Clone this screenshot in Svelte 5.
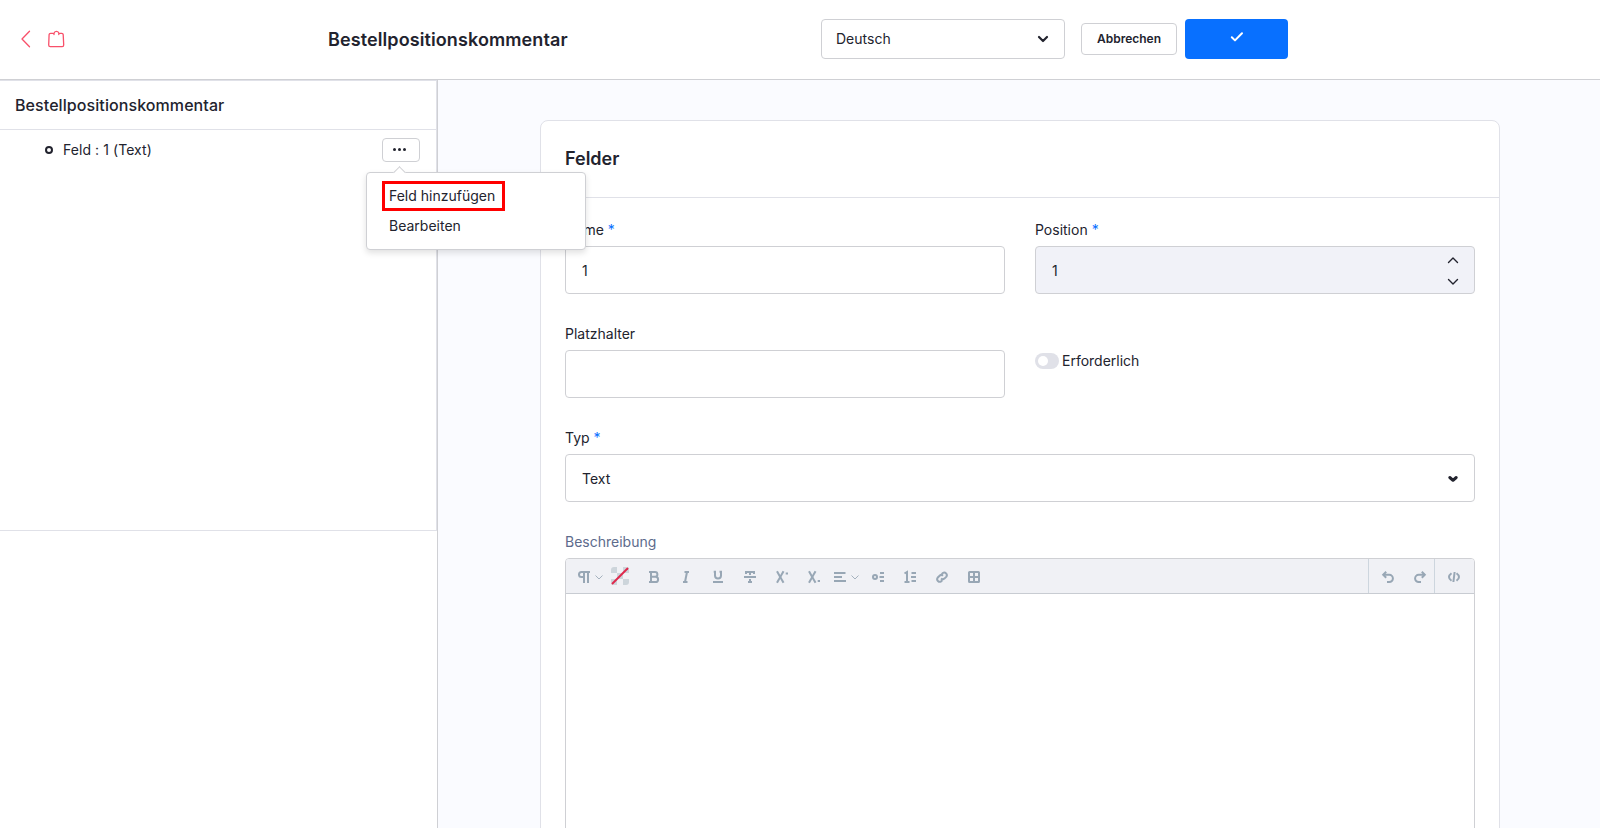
<script lang="ts">
	interface Tool {
		name: string;
		paths: string[];
		width?: number;
		chevron?: boolean;
		color?: boolean;
	}

	let language = $state('Deutsch');
	let name = $state('1');
	let position = $state('1');
	let placeholder = $state('');
	let required = $state(false);
	let menuOpen = $state(true);

	// toolbar icons are drawn on a 12x12 grid
	const tools: Tool[] = [
		{
			name: 'Absatz',
			paths: ['M12 1H3.5a2.5 2.5 0 0 0 0 5H6', 'M6 1v11', 'M10 1v11'],
			width: 38,
			chevron: true
		},
		{ name: 'Textfarbe', paths: [], width: 34, color: true },
		{
			name: 'Fett',
			paths: ['M1 1h6a2.4 2.4 0 0 1 0 4.8H3M7 5.8h.5a2.6 2.6 0 0 1 0 5.2H1', 'M3 1v10']
		},
		{ name: 'Kursiv', paths: ['M4.5 1H9', 'M3 11h4.5', 'M7 1 5 11'] },
		{ name: 'Unterstrichen', paths: ['M1 11h10', 'M3 0v4.5a3 3 0 0 0 6 0V0', 'M1.7.8H4M7.500.8h2.500'] },
		{ name: 'Durchgestrichen', paths: ['M2 3V1h8v2', 'M6 1v3', 'M0 6h12', 'M6 8v3', 'M4 11h4'] },
		{ name: 'Hochgestellt', paths: ['M1 .3 7.5 11.700', 'M7.5.3 1 11.700', 'M9.700 2.500h2.300'] },
		{ name: 'Tiefgestellt', paths: ['M1 .3 7.5 11.700', 'M7.5.3 1 11.700', 'M9.700 10h2.300'] },
		{ name: 'Ausrichtung', paths: ['M0 2h11.5', 'M0 6h8', 'M0 10h12'], chevron: true },
		{
			name: 'Liste',
			paths: ['M3 4a2 2 0 1 1 0 4a2 2 0 1 1 0-4', 'M8 2h4', 'M7.5 6H12', 'M8 10h4']
		},
		{
			name: 'Nummerierte Liste',
			paths: ['M.5 2.5 3 1v10', 'M.5 11h5', 'M7.5 2H12', 'M7 6h5', 'M7.5 10H12']
		},
		{
			name: 'Link',
			paths: [
				'M5 7.6a2.5 2.5 0 0 0 3.4 0l2-2A2.6 2.6 0 0 0 6.8 2L5.7 3.1',
				'M7 4.7a2.5 2.5 0 0 0-3.4 0l-2 2A2.6 2.6 0 0 0 5.2 10.3L6.3 9.2'
			]
		},
		{
			name: 'Tabelle',
			paths: ['M1.600 1h8.800q.6 0 .6.6v8.800q0 .6-.6.6H1.600q-.6 0-.6-.6V1.600q0-.6.6-.6z', 'M6 1v10', 'M1 6h10']
		}
	];

	const history: Tool[] = [
		{ name: 'Rückgängig', paths: ['M4.2.8 1.2 3.8l3 3', 'M1.5 3.8h5.8a3.6 3.6 0 0 1 0 7.2H5'] },
		{ name: 'Wiederholen', paths: ['M7.8.8l3 3-3 3', 'M10.5 3.8H4.7a3.6 3.6 0 0 0 0 7.2H7'] }
	];

	const code: Tool = {
		name: 'Quelltext',
		paths: ['M3.5 2.2Q1 4 1 6t2.5 3.8', 'M8.5 2.2Q11 4 11 6T8.5 9.8', 'M6.6 1 5.4 11']
	};
</script>

{#snippet tool(item: Tool)}
	<button class="tool" style:width="{item.width ?? 32}px" aria-label={item.name}>
		{#if item.color}
			<svg class="swatch" width="18" height="18" viewBox="0 0 18 18">
				<path
					d="M3 0h3v6H0V3a3 3 0 0 1 3-3zM12 0h3a3 3 0 0 1 3 3v3h-6zM6 6h6v6H6zM0 12h6v6H3a3 3 0 0 1-3-3zM12 12h6v3a3 3 0 0 1-3 3h-3z"
					fill="#cdd5db"
				/>
				<path d="M1.5 16.5 16.5 1.5" stroke="#de294c" stroke-width="2" stroke-linecap="round" />
			</svg>
		{:else}
			<svg class="glyph" width="12" height="12" viewBox="0 0 12 12">
				{#each item.paths as d}
					<path {d} />
				{/each}
			</svg>
		{/if}
		{#if item.chevron}
			<svg class="caret" width="8" height="5" viewBox="0 0 8 5"><path d="M.5.5 4 4 7.5.5" /></svg>
		{/if}
	</button>
{/snippet}

<div class="page">
	<header class="header">
		<div class="nav">
			<svg width="10" height="18" viewBox="0 0 10 18"><path d="M8.5 1.3 1 9l7.5 7.7" /></svg>
			<svg class="bag" width="17" height="18" viewBox="0 0 17 18">
				<path
					d="M6 4.500V3.400H2.500Q1.200 3.400 1.100 4.600L.7 15q0 1.600 1.500 1.600h12q1.500 0 1.500-1.600l-.5-10.400q-.1-1.200-1.400-1.200h-3v1.100M6 3.400a2.500 2.500 0 0 1 4.900 0"
				/>
			</svg>
		</div>
		<h1>Bestellpositionskommentar</h1>
		<div class="actions">
			<button class="language">
				{language}
				<svg width="12" height="8" viewBox="0 0 12 8"><path d="M2 2l4 4 4-4" /></svg>
			</button>
			<button class="cancel">Abbrechen</button>
			<button class="save" aria-label="Speichern">
				<svg width="14" height="12" viewBox="0 0 14 12"><path d="M1.8 6.3 5 9.4l7-7.1" /></svg>
			</button>
		</div>
	</header>

	<div class="content">
		<aside class="sidebar">
			<section class="tree">
				<h2>Bestellpositionskommentar</h2>
				<div class="node">
					<span class="dot"></span>
					<span class="node-label">Feld : 1 (Text)</span>
					<div class="context">
						<button class="more" aria-label="Mehr" onclick={() => (menuOpen = !menuOpen)}>
							<i></i><i></i><i></i>
						</button>
						{#if menuOpen}
							<ul class="menu">
								<li class="marked">Feld hinzufügen</li>
								<li>Bearbeiten</li>
							</ul>
						{/if}
					</div>
				</div>
			</section>
		</aside>

		<main>
			<section class="card">
				<h3>Felder</h3>
				<div class="form">
					<div class="field">
						<label for="name">Name <b>*</b></label>
						<input id="name" bind:value={name} />
					</div>
					<div class="field">
						<label for="position">Position <b>*</b></label>
						<div class="number">
							<input id="position" bind:value={position} />
							<div class="steps">
								<svg width="12" height="8" viewBox="0 0 12 8"><path d="M1.5 6.5 6 2l4.5 4.5" /></svg>
								<svg width="12" height="8" viewBox="0 0 12 8"><path d="M1.5 1.5 6 6l4.5-4.5" /></svg>
							</div>
						</div>
					</div>
					<div class="field">
						<label for="placeholder">Platzhalter</label>
						<input id="placeholder" bind:value={placeholder} />
					</div>
					<div class="toggle">
						<button
							class="switch"
							class:on={required}
							aria-label="Erforderlich"
							onclick={() => (required = !required)}
						></button>
						<span>Erforderlich</span>
					</div>
					<div class="field wide">
						<label for="type">Typ <b>*</b></label>
						<button id="type" class="select">
							Text
							<svg width="12" height="8" viewBox="0 0 12 8"><path d="M2.8 2.5 6 5.3l3.2-2.8" /></svg>
						</button>
					</div>
					<div class="field wide">
						<span class="editor-label">Beschreibung</span>
						<div class="editor">
							<div class="toolbar">
								<div class="group main">
									{#each tools as item}
										{@render tool(item)}
									{/each}
								</div>
								<div class="group history">
									{#each history as item}
										{@render tool(item)}
									{/each}
								</div>
								<div class="group code">{@render tool(code)}</div>
							</div>
						</div>
					</div>
				</div>
			</section>
		</main>
	</div>
</div>

<style>
	:global(body) {
		margin: 0;
		overflow: hidden;
	}

	.page,
	.page * {
		box-sizing: border-box;
	}

	.page {
		display: flex;
		flex-direction: column;
		height: 100vh;
		overflow: hidden;
		font-family: Inter, 'Liberation Sans', sans-serif;
		font-size: 14px;
		line-height: 20px;
		color: #22232e;
		background: #fff;
	}

	svg {
		display: block;
		flex: none;
		fill: none;
	}

	button,
	input {
		font: inherit;
		color: inherit;
		margin: 0;
		padding: 0;
		border: 0;
		background: none;
		text-align: left;
	}

	h1,
	h2,
	h3 {
		margin: 0;
	}

	.header {
		display: flex;
		align-items: center;
		flex: none;
		height: 80px;
		border-bottom: 1px solid #cfd0d4;
	}

	.nav {
		display: flex;
		gap: 17px;
		width: 328px;
		padding: 0 0 2px 21px;
		stroke: #f8506a;
		stroke-width: 1.3;
		stroke-linecap: round;
		stroke-linejoin: round;
	}

	.header h1 {
		width: 493px;
		font-size: 18px;
		font-weight: 600;
		line-height: 24px;
		letter-spacing: 0.1px;
	}

	.actions {
		display: flex;
		align-items: center;
		padding-bottom: 2px;
	}

	.language {
		display: flex;
		align-items: center;
		justify-content: space-between;
		width: 244px;
		height: 40px;
		margin-right: 16px;
		padding: 0 15px 0 14px;
		border: 1px solid #cfd0d4;
		border-radius: 4px;
	}

	.language svg,
	.select svg {
		stroke: #22232e;
		stroke-width: 2.2;
		stroke-linecap: round;
		stroke-linejoin: round;
	}

	.cancel {
		width: 96px;
		height: 32px;
		margin-right: 8px;
		border: 1px solid #cfd0d4;
		border-radius: 4px;
		font-size: 12px;
		font-weight: 600;
		text-align: center;
	}

	.save {
		display: flex;
		justify-content: center;
		width: 103px;
		height: 40px;
		border-radius: 4px;
		background: #0870ff;
	}

	.save svg {
		margin-top: 12px;
		stroke: #fff;
		stroke-width: 2;
		stroke-linecap: round;
		stroke-linejoin: round;
	}

	.content {
		display: flex;
		flex: 1;
		min-height: 0;
	}

	.sidebar {
		flex: none;
		width: 438px;
		border-right: 1px solid #cfd0d4;
	}

	.tree {
		height: 451px;
		border: 1px solid #e0e1e8;
		border-left: 0;
	}

	.tree h2 {
		height: 49px;
		padding-left: 15px;
		border-bottom: 1px solid #e0e1e8;
		font-size: 16px;
		font-weight: 500;
		line-height: 48px;
		letter-spacing: 0.08px;
	}

	.node {
		display: flex;
		align-items: center;
		height: 40px;
		padding: 0 16px 0 45px;
	}

	.dot {
		width: 8px;
		height: 8px;
		border: 2px solid #22232e;
		border-radius: 50%;
	}

	.node-label {
		flex: 1;
		padding-left: 10px;
		letter-spacing: 0.07px;
	}

	.context {
		position: relative;
	}

	.more {
		display: flex;
		align-items: center;
		gap: 2px;
		width: 38px;
		height: 24px;
		padding: 0 0 1px 10px;
		border: 1px solid #cfd0d4;
		border-radius: 4px;
	}

	.more i {
		width: 3px;
		height: 3px;
		border-radius: 50%;
		background: #22232e;
	}

	.menu {
		position: absolute;
		z-index: 2;
		top: 34px;
		left: -16px;
		width: 220px;
		height: 78px;
		margin: 0;
		padding: 8px 15px;
		border: 1px solid #cfd0d4;
		border-radius: 4px;
		background: #fff;
		box-shadow: 0 3px 6px rgba(0, 0, 0, 0.12);
		list-style: none;
	}

	.menu::before {
		content: '';
		position: absolute;
		top: -5px;
		left: 28px;
		width: 8px;
		height: 8px;
		border: solid #cfd0d4;
		border-width: 1px 0 0 1px;
		background: #fff;
		transform: rotate(45deg);
	}

	.menu li {
		width: 123px;
		height: 30px;
		padding-left: 7px;
		line-height: 30px;
	}

	.menu .marked {
		padding-left: 4px;
		border: 3px solid #f00;
		line-height: 24px;
	}

	main {
		flex: 1;
		padding: 40px 100px 0 102px;
		background: #fafbff;
	}

	.card {
		height: 900px;
		border: 1px solid #e0e1e8;
		border-radius: 8px;
		background: #fff;
	}

	.card h3 {
		height: 77px;
		padding: 26px 24px 0;
		border-bottom: 1px solid #e0e1e8;
		font-size: 18px;
		font-weight: 600;
		line-height: 24px;
	}

	.form {
		display: grid;
		grid-template-columns: 1fr 1fr;
		column-gap: 30px;
		row-gap: 32px;
		padding: 22px 24px 0;
	}

	.field {
		height: 72px;
	}

	.field label,
	.editor-label {
		display: block;
		height: 26px;
	}

	.field b {
		font-weight: 400;
		color: #0870ff;
	}

	.field input,
	.select {
		display: block;
		width: 100%;
		height: 48px;
		padding: 1px 16px 0;
		border: 1px solid #cfd0d4;
		border-radius: 4px;
		outline: none;
	}

	.number {
		position: relative;
	}

	.number input {
		background: #f1f2f8;
	}

	.steps {
		position: absolute;
		top: 10px;
		right: 16px;
		display: grid;
		gap: 14px;
		stroke: #22232e;
		stroke-width: 1.4;
		stroke-linecap: round;
		stroke-linejoin: round;
	}

	.toggle {
		display: flex;
		align-items: center;
		gap: 3px;
		height: 74px;
		margin-bottom: -2px;
	}

	.switch {
		width: 24px;
		height: 16px;
		padding: 3px;
		border-radius: 8px;
		background: #e0e1e8;
	}

	.switch::before {
		content: '';
		display: block;
		width: 10px;
		height: 10px;
		border-radius: 50%;
		background: #fff;
	}

	.switch.on::before {
		margin-left: 8px;
	}

	.wide {
		grid-column: 1 / -1;
	}

	.select {
		display: flex;
		align-items: center;
		justify-content: space-between;
		padding: 2px 15px 0 16px;
	}

	.select svg {
		margin-top: -1px;
		stroke-width: 3;
	}

	.editor-label {
		color: #5d6b8c;
	}

	.editor {
		height: 460px;
		border: 1px solid #cfd0d4;
		border-radius: 4px;
		overflow: hidden;
	}

	.toolbar {
		display: flex;
		height: 35px;
		border-bottom: 1px solid #c8ccd2;
		background: #f0f1f5;
	}

	.group {
		display: flex;
	}

	.group.main {
		flex: 1;
	}

	.group.history {
		width: 66px;
		padding-left: 3px;
		border-left: 1px solid #cdd6de;
	}

	.group.code {
		justify-content: center;
		width: 40px;
		padding-right: 1px;
		border-left: 1px solid #cdd6de;
	}

	.tool {
		display: flex;
		flex: none;
		align-items: center;
		justify-content: center;
		gap: 5px;
		padding-top: 2px;
	}

	.main .tool:first-child {
		padding-left: 11px;
	}

	.swatch {
		margin: -2px 2px 0 0;
	}

	.glyph {
		stroke: #98a7b5;
		stroke-width: 2;
		overflow: visible;
	}

	.caret {
		stroke: #a5b2be;
		stroke-width: 1;
	}
</style>
